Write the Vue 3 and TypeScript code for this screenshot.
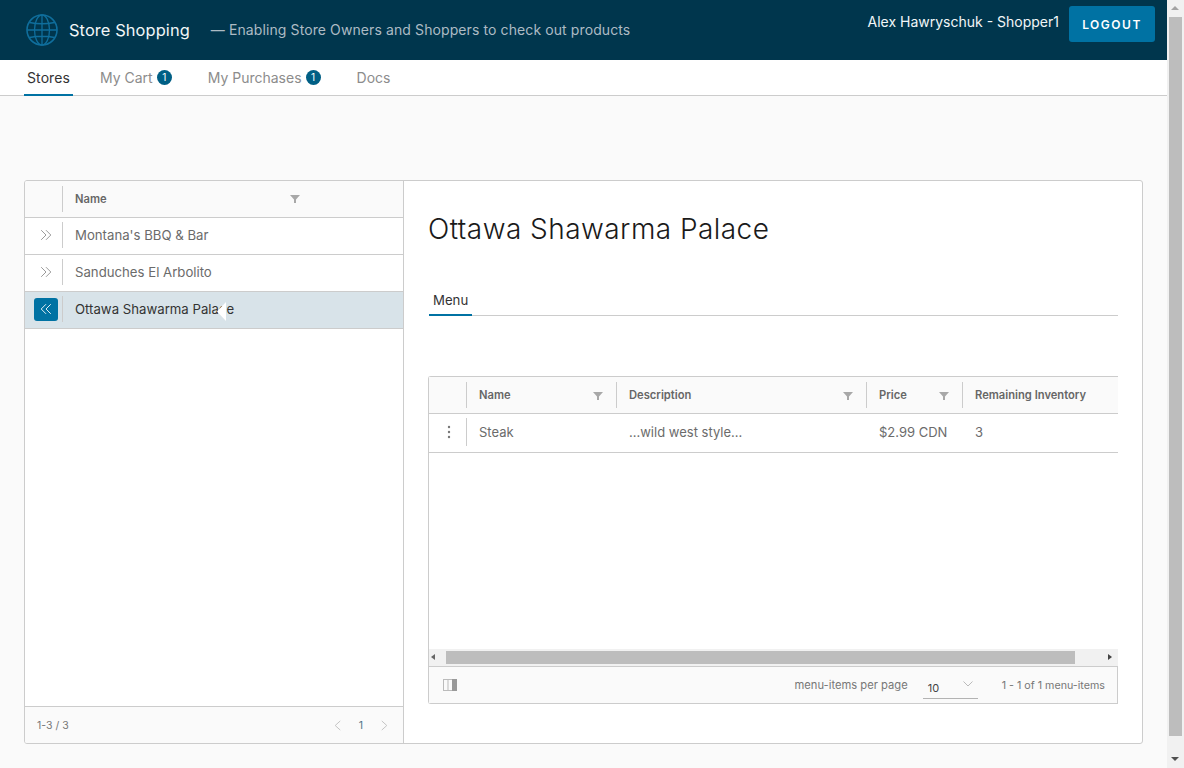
<template>
  <div class="page">
    <div class="main">
      <header class="header">
        <div class="branding">
          <svg class="globe" viewBox="0 0 32 32" fill="none" stroke="currentColor" stroke-width="1.3">
            <circle cx="16" cy="16" r="15" stroke-width="1.6" />
            <ellipse cx="16" cy="16" rx="7.5" ry="15" />
            <path d="M16 1v30M1 16h30M3.500 8.500q12.500 2.500 25 0M3.500 23.500q12.500-2.500 25 0" />
          </svg>
          <span class="title">Store Shopping</span>
        </div>
        <span class="tagline">— Enabling Store Owners and Shoppers to check out products</span>
        <div class="user">
          <span class="user-name">Alex Hawryschuk - Shopper1</span>
          <button class="logout">LOGOUT</button>
        </div>
      </header>

      <nav class="subnav">
        <a v-for="t in navTabs" :key="t.label" class="nav-tab" :class="{ active: t.active }">
          {{ t.label }}<span v-if="t.badge" class="badge">{{ t.badge }}</span>
        </a>
      </nav>

      <main class="content">
        <section class="card">
          <aside class="stores">
            <div class="row head">
              <div class="cell-icon"></div>
              <div class="cell-name">
                <span class="th">Name</span>
                <svg class="filter store-filter" viewBox="0 0 10 10"><path d="M0 1h10L6 5.500V9H4V5.500z" /></svg>
              </div>
            </div>
            <div v-for="s in stores" :key="s.name" class="row store" :class="{ selected: s.selected }">
              <div class="cell-icon">
                <span class="caret-btn">
                  <svg viewBox="0 0 16 16" fill="none" stroke="currentColor" stroke-width="1">
                    <path v-if="s.selected" d="M8 2.500 2.500 8 8 13.500M13.500 2.500 8 8l5.500 5.500" />
                    <path v-else d="M2.500 2.500 8 8l-5.500 5.500M8 2.500 13.500 8 8 13.500" />
                  </svg>
                </span>
              </div>
              <div class="cell-name">{{ s.name }}</div>
            </div>
            <div class="stores-fill"></div>
            <footer class="stores-foot">
              <span>1-3 / 3</span>
              <div class="pager">
                <svg viewBox="0 0 8 12" fill="none" stroke="currentColor"><path d="M7 1 1.500 6 7 11" /></svg>
                <span class="page-no">1</span>
                <svg viewBox="0 0 8 12" fill="none" stroke="currentColor"><path d="M1 1l5.500 5L1 11" /></svg>
              </div>
            </footer>
          </aside>

          <div class="detail">
            <h1 class="store-title">Ottawa Shawarma Palace</h1>
            <div class="detail-tabs"><span class="detail-tab">Menu</span></div>

            <div class="grid">
              <div class="grid-row grid-head">
                <div class="col col-act"></div>
                <div v-for="c in columns" :key="c.label" class="col" :style="{ width: c.width + 'px' }">
                  <span class="th">{{ c.label }}</span>
                  <svg v-if="c.filter" class="filter" viewBox="0 0 10 10"><path d="M0 1h10L6 5.500V9H4V5.500z" /></svg>
                </div>
              </div>
              <div class="grid-row grid-item">
                <div class="col col-act">
                  <svg class="kebab" viewBox="0 0 4 14"><circle cx="2" cy="2" r="1.200" /><circle cx="2" cy="7" r="1.200" /><circle cx="2" cy="12" r="1.200" /></svg>
                </div>
                <div v-for="(v, i) in item" :key="i" class="col" :style="{ width: columns[i].width + 'px' }">{{ v }}</div>
              </div>
              <div class="grid-fill"></div>
              <div class="hscroll">
                <span class="arrow left"></span>
                <div class="hscroll-track"><div class="hscroll-thumb"></div></div>
                <span class="arrow right"></span>
              </div>
              <footer class="grid-foot">
                <svg class="col-toggle" viewBox="0 0 14 12">
                  <rect x="0.500" y="0.500" width="13" height="11" fill="none" stroke="#bbb" />
                  <path d="M5 0v12" stroke="#bbb" />
                  <rect x="9" y="0" width="5" height="12" fill="#999" />
                </svg>
                <span class="per-page">menu-items per page</span>
                <div class="select">
                  <span>10</span>
                  <svg viewBox="0 0 10 6" fill="none" stroke="#bbb"><path d="M.5.5 5 5 9.500.5" /></svg>
                </div>
                <span class="count">1 - 1 of 1 menu-items</span>
              </footer>
            </div>
          </div>
        </section>
      </main>
    </div>

    <div class="vscroll">
      <span class="v-arrow up"></span>
      <div class="v-thumb"></div>
      <span class="v-arrow down"></span>
    </div>

    <svg class="pointer" viewBox="0 0 9 19"><path d="M9 0v19L0 9.500z" fill="#fff" /></svg>
  </div>
</template>

<script setup lang="ts">
interface NavTab {
  label: string
  badge?: number
  active?: boolean
}

const navTabs: NavTab[] = [
  { label: 'Stores', active: true },
  { label: 'My Cart', badge: 1 },
  { label: 'My Purchases', badge: 1 },
  { label: 'Docs' },
]

const stores = [
  { name: "Montana's BBQ & Bar", selected: false },
  { name: 'Sanduches El Arbolito', selected: false },
  { name: 'Ottawa Shawarma Palace', selected: true },
]

const columns = [
  { label: 'Name', width: 150, filter: true },
  { label: 'Description', width: 250, filter: true },
  { label: 'Price', width: 96, filter: true },
  { label: 'Remaining Inventory', width: 156, filter: false },
]

const item = ['Steak', '...wild west style...', '$2.99 CDN', '3']
</script>

<style>
html,
body {
  margin: 0;
  height: 100%;
  overflow: hidden;
}
</style>

<style scoped>
.page {
  display: flex;
  position: relative;
  width: 1184px;
  height: 768px;
  overflow: hidden;
  font-family: Inter, "Noto Sans", sans-serif;
  background: #fafafa;
  color: #565656;
}

.main {
  flex: 1;
  min-width: 0;
  display: flex;
  flex-direction: column;
}

.header {
  display: flex;
  height: 60px;
  flex: none;
  background: #00364d;
  color: #fff;
  align-items: center;
  padding-left: 26px;
}

.branding {
  display: flex;
  align-items: center;
  gap: 11px;
}

.globe {
  width: 32px;
  height: 32px;
  color: #0f6e9c;
}

.title {
  font-size: 16.4px;
  letter-spacing: 0.1px;
  color: #f2f6f8;
  margin-bottom: 1px;
}

.tagline {
  margin: 0 0 1px 21px;
  font-size: 14px;
  color: #adbbc4;
  letter-spacing: 0.1px;
}

.user {
  margin-left: auto;
  display: flex;
  align-items: flex-start;
  align-self: flex-start;
  gap: 10px;
  padding: 6px 12px 0 0;
}

.user-name {
  font-size: 14px;
  line-height: 32px;
  color: #f2f6f8;
  height: 32px;
}

.logout {
  width: 86px;
  height: 36px;
  border: 0;
  border-radius: 3px;
  background: #0072a3;
  color: #fff;
  font: 600 12px Inter, sans-serif;
  letter-spacing: 1.5px;
}

.subnav {
  display: flex;
  flex: none;
  height: 36px;
  box-sizing: border-box;
  background: #fff;
  border-bottom: 1px solid #ccc;
  padding-left: 24px;
  gap: 24px;
}

.nav-tab {
  display: flex;
  align-items: center;
  height: 36px;
  box-sizing: border-box;
  padding: 0 3px 2px;
  font-size: 14px;
  color: #8c8c8c;
}

.nav-tab.active {
  color: #333;
  border-bottom: 2px solid #0072a3;
  padding: 1px 3px 0;
  letter-spacing: 0.1px;
}

.badge {
  display: inline-flex;
  align-items: center;
  justify-content: center;
  width: 15px;
  height: 15px;
  margin: 0 6px 0 4px;
  border-radius: 50%;
  background: #005f85;
  color: #fff;
  font-size: 10px;
}

.content {
  flex: 1;
  min-height: 0;
  padding: 84px 24px 0;
}

.card {
  display: flex;
  height: 564px;
  box-sizing: border-box;
  border: 1px solid #ccc;
  border-radius: 3px;
  background: #fff;
  overflow: hidden;
}

.stores {
  width: 379px;
  flex: none;
  box-sizing: border-box;
  display: flex;
  flex-direction: column;
  border-right: 1px solid #ccc;
}

.row {
  display: flex;
  align-items: center;
  height: 37px;
  flex: none;
  box-sizing: border-box;
  border-bottom: 1px solid #ccc;
  font-size: 13.2px;
}

.row.head {
  background: #fafafa;
}

.store {
  padding-bottom: 2px;
}

.cell-icon {
  width: 38px;
  height: 26px;
  box-sizing: border-box;
  flex: none;
  display: flex;
  align-items: center;
  justify-content: center;
  padding-left: 4px;
  border-right: 1px solid #ccc;
}

.cell-name {
  flex: 1;
  display: flex;
  align-items: center;
  position: relative;
  padding-left: 12px;
  color: #6b6b6b;
}

.th {
  font-size: 11.2px;
  font-weight: 600;
  color: #666;
}

.filter {
  width: 10px;
  height: 10px;
  fill: #a8a8a8;
}

.store-filter {
  position: absolute;
  left: 227px;
  top: 2px;
}

.caret-btn {
  display: flex;
  align-items: center;
  justify-content: center;
  width: 24px;
  height: 23px;
  border-radius: 3px;
  color: #8c8c8c;
}

.caret-btn svg {
  width: 14px;
  height: 14px;
}

.store.selected {
  background: #d8e3e9;
}

.store.selected .cell-name {
  color: #333;
}

.store.selected .caret-btn {
  background: #0072a3;
  color: #fff;
}

.stores-fill {
  flex: 1;
}

.stores-foot {
  flex: none;
  height: 37px;
  box-sizing: border-box;
  display: flex;
  align-items: center;
  justify-content: space-between;
  padding: 0 14px 0 12px;
  border-top: 1px solid #ccc;
  background: #fafafa;
  font-size: 10.5px;
  color: #777;
}

.pager {
  display: flex;
  align-items: center;
  gap: 17px;
}

.pager svg {
  width: 9px;
  height: 11px;
  color: #c0c0c0;
}

.page-no {
  color: #4f7488;
}

.detail {
  flex: 1;
  min-width: 0;
  padding: 0 24px;
}

.store-title {
  margin: 28px 0 0;
  height: 40px;
  line-height: 40px;
  font-size: 28px;
  font-weight: 300;
  letter-spacing: 0.45px;
  color: #1a1a1a;
}

.detail-tabs {
  margin: 35px 0 0 1px;
  height: 32px;
  box-sizing: border-box;
  border-bottom: 1px solid #ccc;
}

.detail-tab {
  display: inline-block;
  height: 32px;
  line-height: 32px;
  box-sizing: border-box;
  padding: 0 4px;
  border-bottom: 2px solid #0072a3;
  font-size: 13.2px;
  color: #333;
}

.grid {
  margin-top: 60px;
  height: 328px;
  box-sizing: border-box;
  display: flex;
  flex-direction: column;
  border: 1px solid #ccc;
  border-right: 0;
  border-radius: 3px 0 0 3px;
}

.grid-row {
  display: flex;
  align-items: center;
  flex: none;
  overflow: hidden;
  box-sizing: border-box;
  border-bottom: 1px solid #ccc;
}

.grid-head {
  height: 37px;
  background: #fafafa;
}

.grid-item {
  height: 39px;
  font-size: 13px;
  color: #6b6b6b;
  padding-bottom: 2px;
}

.col {
  flex: none;
  position: relative;
  display: flex;
  align-items: center;
  box-sizing: border-box;
  height: 26px;
  padding-left: 12px;
  border-left: 1px solid #ccc;
}

.grid-item .col {
  height: 28px;
  padding-left: 12px;
  border-left: 0;
}

.grid-item .col-act {
  border-right: 1px solid #ccc;
  padding: 0 0 0 3px;
  width: 38px;
}

.col-act {
  width: 37px;
  border-left: 0;
  padding: 0;
  justify-content: center;
}

.col .filter {
  position: absolute;
  right: 13px;
  top: 9px;
}

.kebab {
  width: 4px;
  height: 14px;
  fill: #777;
}

.grid-fill {
  flex: 1;
}

.hscroll {
  flex: none;
  display: flex;
  align-items: center;
  height: 17px;
  background: #f1f1f1;
}

.hscroll-track {
  flex: 1;
  height: 13px;
  padding-right: 26px;
}

.hscroll-thumb {
  height: 100%;
  background: #bdbdbd;
}

.arrow {
  width: 17px;
  height: 17px;
  flex: none;
  position: relative;
}

.arrow::after {
  content: "";
  position: absolute;
  top: 5px;
  border: 3.5px solid transparent;
}

.arrow.left::after {
  left: 2px;
  border-right: 4px solid #666;
  border-left: 0;
}

.arrow.right::after {
  right: 6px;
  border-left: 4px solid #444;
  border-right: 0;
}

.grid-foot {
  flex: none;
  height: 37px;
  box-sizing: border-box;
  display: flex;
  align-items: center;
  border-top: 1px solid #ccc;
  border-right: 1px solid #ccc;
  background: #fafafa;
  padding: 0 12px 0 14px;
  font-size: 11px;
  color: #777;
}

.col-toggle {
  width: 14px;
  height: 12px;
}

.per-page {
  margin-left: auto;
  font-size: 11.2px;
}

.count {
  font-size: 10.7px;
}

.select {
  display: flex;
  align-items: center;
  justify-content: space-between;
  box-sizing: border-box;
  width: 55px;
  height: 24px;
  margin: 4px 24px 0 15px;
  padding: 2px 5px 0;
  border-bottom: 1px solid #b3b3b3;
  font-size: 11px;
  color: #444;
}

.select svg {
  width: 10px;
  height: 6px;
  margin-top: -8px;
}

.vscroll {
  position: relative;
  width: 17px;
  flex: none;
  display: flex;
  flex-direction: column;
  align-items: center;
  background: #f1f1f1;
}

.v-arrow {
  flex: none;
  width: 17px;
  height: 17px;
  position: relative;
}

.v-arrow::after {
  content: "";
  position: absolute;
  left: 4px;
  border: 4px solid transparent;
  border-top: 0;
  border-bottom: 4px solid #a3a3a3;
  top: 6px;
}

.v-arrow.down::after {
  border-bottom: 0;
  border-top: 4px solid #505050;
}

.v-thumb {
  flex: 1;
  width: 13px;
  margin-bottom: 15px;
  background: #bdbdbd;
}

.pointer {
  position: absolute;
  left: 217px;
  top: 302px;
  width: 9px;
  height: 19px;
}
</style>
